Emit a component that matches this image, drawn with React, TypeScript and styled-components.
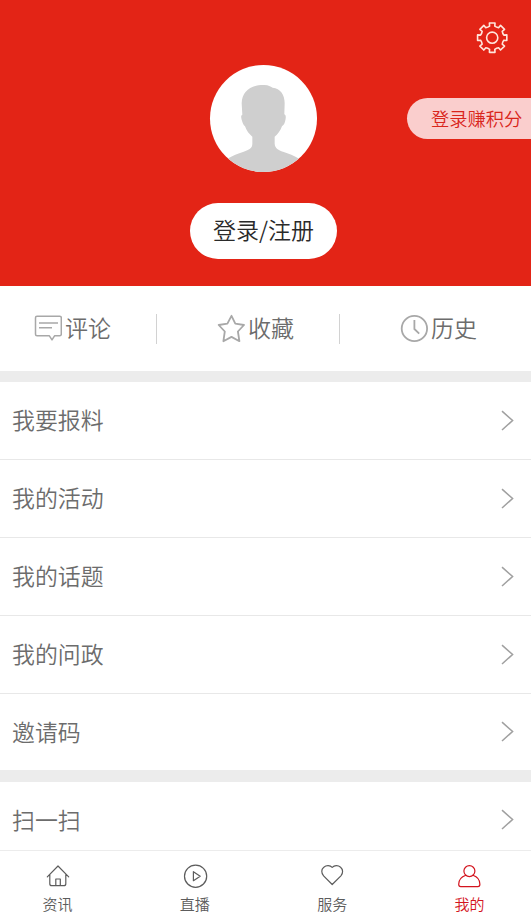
import React from "react";
import styled, { createGlobalStyle } from "styled-components";

const GlobalStyle = createGlobalStyle`
  * { box-sizing: border-box; }
  body {
    margin: 0;
    background: #fff;
    font-family: "Noto Sans CJK SC DemiLight", "Noto Sans CJK SC", "Noto Sans", sans-serif;
    font-weight: 350;
  }
`;

const Screen = styled.div`
  display: flex;
  flex-direction: column;
  height: 922px;
  overflow: hidden;
  background: #fff;
`;

const Header = styled.header`
  position: relative;
  flex: none;
  display: flex;
  flex-direction: column;
  align-items: center;
  height: 286px;
  padding: 65px 4px 0 0;
  background: #e32416;
`;

const Avatar = styled.div`
  width: 107px;
  height: 107px;
  border-radius: 50%;
  overflow: hidden;
  background: #fff;
  svg { display: block; }
`;

const LoginButton = styled.button`
  width: 147px;
  height: 56px;
  margin-top: 31px;
  padding: 0 0 3px;
  border: 0;
  border-radius: 28px;
  background: #fff;
  color: #2a2a2a;
  font: inherit;
  font-size: 23px;
  line-height: 53px;
`;

const SettingsButton = styled.button`
  position: absolute;
  top: 21px;
  right: 22px;
  width: 34px;
  height: 34px;
  padding: 0;
  border: 0;
  background: none;
  svg { display: block; }
`;

const PointsBadge = styled.div`
  position: absolute;
  top: 98px;
  right: 0;
  width: 124px;
  height: 41px;
  padding-left: 24px;
  border-radius: 21px 0 0 21px;
  background: #facecd;
  color: #d9251b;
  font-size: 18.3px;
  line-height: 41px;
  white-space: nowrap;
`;

const Shortcuts = styled.section`
  flex: none;
  display: grid;
  grid-template-columns: 157px 183px 1fr;
  align-items: center;
  height: 85px;
`;

const Shortcut = styled.div<{ $inset: number; $divided?: boolean }>`
  display: flex;
  align-items: center;
  gap: 3px;
  height: 30px;
  padding-left: ${(p) => p.$inset}px;
  border-right: ${(p) => (p.$divided ? "1px solid #d2d2d2" : "0")};
  color: #6c6c6c;
  font-size: 23px;
  line-height: 30px;
  svg { flex: none; display: block; }
`;

const Label = styled.span`
  padding-bottom: 3px;
`;

const Band = styled.div<{ $height: number }>`
  flex: none;
  height: ${(p) => p.$height}px;
  background: #ececec;
`;

const Menu = styled.ul`
  flex: none;
  margin: 0;
  padding: 0;
  list-style: none;
`;

const MenuRow = styled.li`
  display: flex;
  align-items: center;
  justify-content: space-between;
  height: 78px;
  padding: 0 17px 0 12px;
  border-bottom: 1px solid #e8e8e8;
  color: #6c6c6c;
  font-size: 22.9px;
  line-height: 34px;
  &:last-child { border-bottom: 0; height: 76px; }
`;

const TabBar = styled.nav`
  flex: none;
  display: flex;
  justify-content: space-between;
  height: 72px;
  margin-top: -8px;
  padding: 11px 46.5px 0 42.5px;
  border-top: 1px solid #ececec;
  background: #fff;
  position: relative;
`;

const Tab = styled.div<{ $active?: boolean }>`
  display: flex;
  flex-direction: column;
  align-items: center;
  width: 30px;
  color: ${(p) => (p.$active ? "#d3141e" : "#5c5c5c")};
  font-size: 15px;
  line-height: 20px;
  white-space: nowrap;
  svg { display: block; margin-bottom: 4px; }
`;

const gearPath = (() => {
  const step = Math.PI / 4;
  const at = (r: number, a: number) =>
    `${(17.2 + r * Math.sin(a)).toFixed(2)} ${(16.7 - r * Math.cos(a)).toFixed(2)}`;
  let d = "";
  for (let i = 0; i < 8; i++) {
    const a = i * step;
    d += `${i ? "L" : "M"}${at(11.9, a - 0.22)}L${at(14.9, a - 0.19)}L${at(14.9, a + 0.19)}L${at(11.9, a + 0.22)}`;
    d += `Q${at(11.2, a + step / 2)} ${at(11.9, a + step - 0.22)}`;
  }
  return d + "Z";
})();

const GearIcon = () => (
  <svg width="34" height="34" viewBox="0 0 34 34" fill="none" stroke="#ffe6dc" strokeWidth="1.6" strokeLinejoin="round">
    <path d={gearPath} />
    <circle cx="17.2" cy="16.7" r="5.6" />
  </svg>
);

const Silhouette = () => (
  <svg width="107" height="107" viewBox="30 30 321 321" fill="#cfcfcf">
    <path d="M190 90C205 89 210 94 218 98C241 100 254 118 254 145L253 178C259 180 258 190 255 200C253 209 249 210 246 214C241 228 233 238 224 245V266C225 280 236 286 249 290C267 296 281 301 300 313V360H80V313C99 301 113 296 131 290C147 284 157 280 157 266V245C148 238 139 227 135 214C130 209 128 204 125 194C122 184 124 180 127 179L125 145C126 109 153 90 190 90Z" />
  </svg>
);

const CommentIcon = () => (
  <svg width="28" height="30" viewBox="0 0 28 30" fill="none" stroke="#a8a8a8" strokeWidth="1.5" strokeLinejoin="round">
    <path d="M3 2.2H25.8Q27.3 2.2 27.3 3.7V20.2Q27.3 21.7 25.8 21.7H20.7L18 25.9L15.2 21.7H3Q1.5 21.7 1.5 20.2V3.7Q1.5 2.2 3 2.2Z" />
    <path d="M5 9H24M5 13.8H18" />
  </svg>
);

const StarIcon = () => (
  <svg width="28" height="30" viewBox="0 0 28 30" fill="none" stroke="#a8a8a8" strokeWidth="1.8" strokeLinejoin="round">
    <path d="M14.5 1.8L18.3 9.7L27 11L20.9 17.5L22.4 27.2L14.5 22.9L6.4 27.2L7.8 17.5L1.7 11L10.4 9.7Z" />
  </svg>
);

const ClockIcon = () => (
  <svg width="28" height="30" viewBox="0 0 28 30" fill="none" stroke="#a8a8a8" strokeWidth="1.8">
    <circle cx="14.4" cy="14.5" r="12.7" />
    <path d="M14.4 6V15L19.2 19.7" />
  </svg>
);

const Chevron = () => (
  <svg width="13" height="22" viewBox="0 0 13 22" fill="none" stroke="#a0a0a0" strokeWidth="1.5">
    <path d="M1 1.1L11.6 10.5L1 20" />
  </svg>
);

const iconProps = {
  width: 26,
  height: 28,
  viewBox: "0 0 26 28",
  fill: "none",
  stroke: "currentColor",
  strokeWidth: 1.2,
  strokeLinejoin: "round" as const,
  strokeLinecap: "round" as const,
};

const HomeIcon = () => (
  <svg {...iconProps}>
    <path d="M2.3 14.8L13 4L23.7 14.8M4.8 12.6V21.7Q4.8 23.7 6.8 23.7H18.8Q20.8 23.7 20.8 21.7V12.6M10.8 23.5V17H15.3V23.5" />
  </svg>
);

const PlayIcon = () => (
  <svg {...iconProps}>
    <circle cx="13.6" cy="14.2" r="11.1" />
    <path d="M11.4 9.7V18.7L18.2 14.2Z" />
  </svg>
);

const HeartIcon = () => (
  <svg {...iconProps}>
    <path d="M13.2 22.5L4.6 13.8C2.1 11.2 2.2 7.3 4.8 5.2C7.4 3 11.1 3.2 13.2 5.4C15.4 3.2 19 3 21.6 5.2C24.1 7.3 24.3 11.2 21.9 13.8Z" />
  </svg>
);

const UserIcon = () => (
  <svg {...iconProps}>
    <circle cx="13.4" cy="9.1" r="5.5" />
    <path d="M9.8 13.2C5.4 14.7 2.7 18.1 2.7 22.2Q2.7 24.6 4.7 24.6H21.9Q23.9 24.6 23.9 22.2C23.9 18.1 21.3 14.7 17 13.2" />
  </svg>
);

const menuItems = ["我要报料", "我的活动", "我的话题", "我的问政", "邀请码"];

export default function App() {
  return (
    <>
      <GlobalStyle />
      <Screen>
        <Header>
          <SettingsButton aria-label="设置"><GearIcon /></SettingsButton>
          <Avatar><Silhouette /></Avatar>
          <LoginButton>登录/注册</LoginButton>
          <PointsBadge>登录赚积分</PointsBadge>
        </Header>
        <Shortcuts>
          <Shortcut $inset={34} $divided><CommentIcon /><Label>评论</Label></Shortcut>
          <Shortcut $inset={60} $divided><StarIcon /><Label>收藏</Label></Shortcut>
          <Shortcut $inset={60}><ClockIcon /><Label>历史</Label></Shortcut>
        </Shortcuts>
        <Band $height={11} />
        <Menu>
          {menuItems.map((label) => (
            <MenuRow key={label}><Label>{label}</Label><Chevron /></MenuRow>
          ))}
        </Menu>
        <Band $height={12} />
        <Menu>
          <MenuRow><Label>扫一扫</Label><Chevron /></MenuRow>
        </Menu>
        <TabBar>
          <Tab><HomeIcon />资讯</Tab>
          <Tab><PlayIcon />直播</Tab>
          <Tab><HeartIcon />服务</Tab>
          <Tab $active><UserIcon />我的</Tab>
        </TabBar>
      </Screen>
    </>
  );
}
